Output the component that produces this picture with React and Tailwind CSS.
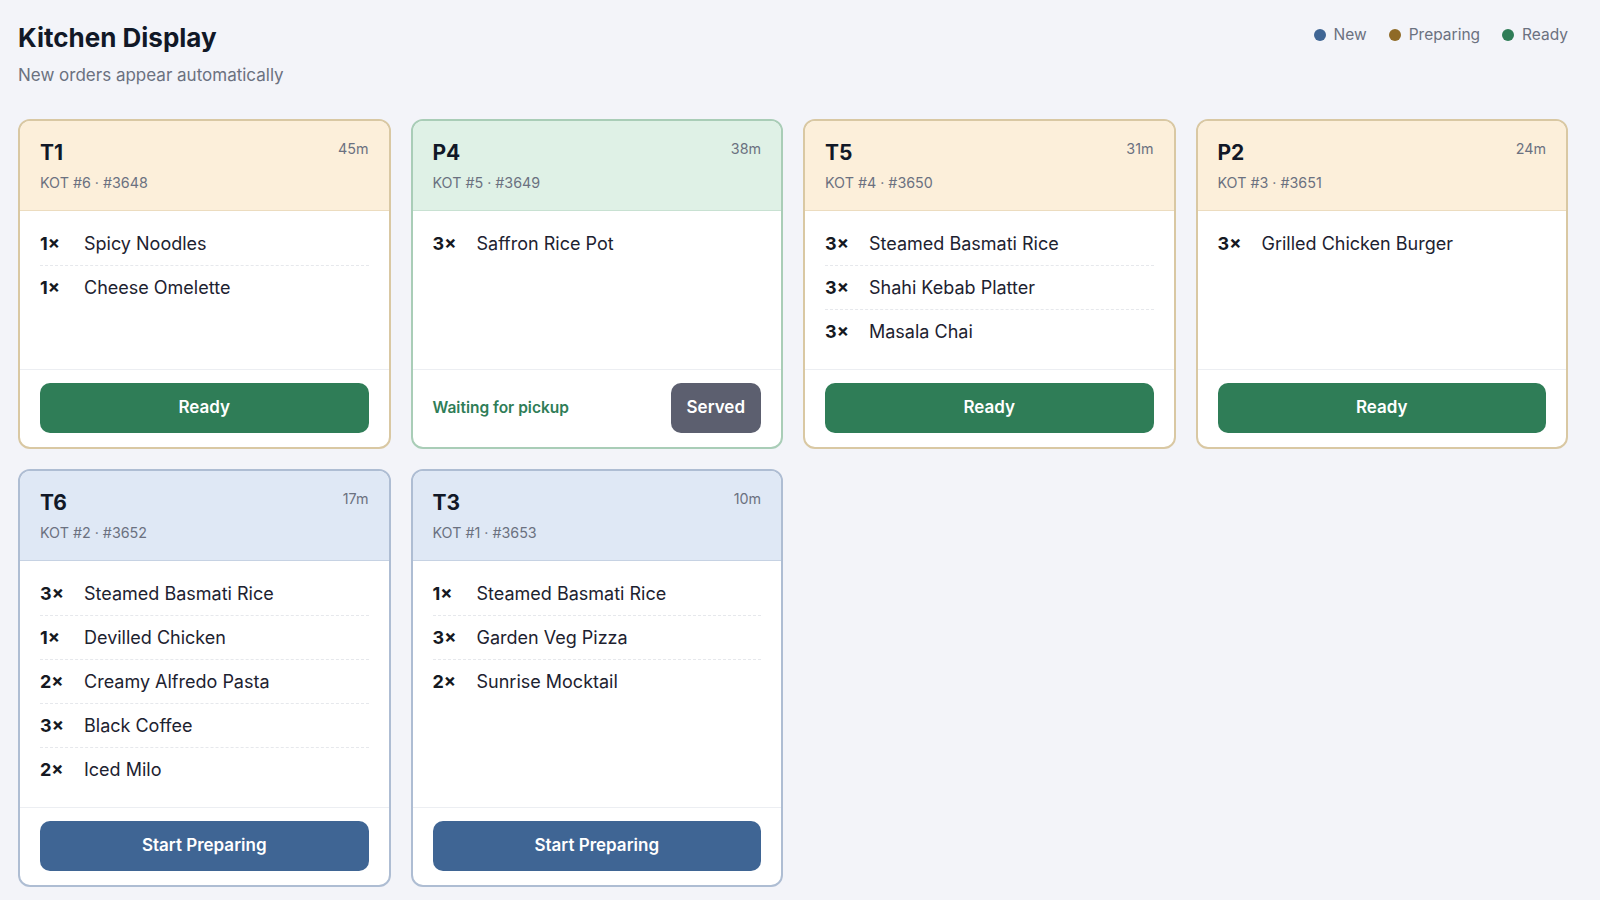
import React from 'react'

const tones = {
  new: {
    border: 'border-[#aebdd3]',
    head: 'bg-[#dfe8f5] border-[#c6d2e3]',
  },
  preparing: {
    border: 'border-[#d9c8a3]',
    head: 'bg-[#fcefda] border-[#ecdcbf]',
  },
  ready: {
    border: 'border-[#a9cdb7]',
    head: 'bg-[#dff1e6] border-[#c8e1d2]',
  },
}

const orders = [
  {
    table: 'T1', kot: 6, id: 3648, age: '45m', status: 'preparing',
    items: [[1, 'Spicy Noodles'], [1, 'Cheese Omelette']],
  },
  {
    table: 'P4', kot: 5, id: 3649, age: '38m', status: 'ready',
    items: [[3, 'Saffron Rice Pot']],
  },
  {
    table: 'T5', kot: 4, id: 3650, age: '31m', status: 'preparing',
    items: [[3, 'Steamed Basmati Rice'], [3, 'Shahi Kebab Platter'], [3, 'Masala Chai']],
  },
  {
    table: 'P2', kot: 3, id: 3651, age: '24m', status: 'preparing',
    items: [[3, 'Grilled Chicken Burger']],
  },
  {
    table: 'T6', kot: 2, id: 3652, age: '17m', status: 'new',
    items: [
      [3, 'Steamed Basmati Rice'],
      [1, 'Devilled Chicken'],
      [2, 'Creamy Alfredo Pasta'],
      [3, 'Black Coffee'],
      [2, 'Iced Milo'],
    ],
  },
  {
    table: 'T3', kot: 1, id: 3653, age: '10m', status: 'new',
    items: [[1, 'Steamed Basmati Rice'], [3, 'Garden Veg Pizza'], [2, 'Sunrise Mocktail']],
  },
]

const Legend = () => (
  <div className="flex items-center gap-[22px] pt-[3px] text-[15.5px] leading-5 text-[#6b7180]">
    <span className="flex items-center gap-2">
      <span className="w-3 h-3 rounded-full bg-[#3f6594]" />
      New
    </span>
    <span className="flex items-center gap-2">
      <span className="w-3 h-3 rounded-full bg-[#8f6a26]" />
      Preparing
    </span>
    <span className="flex items-center gap-2">
      <span className="w-3 h-3 rounded-full bg-[#2f7d57]" />
      Ready
    </span>
  </div>
)

const OrderCard = ({ order }) => {
  const tone = tones[order.status]

  return (
    <div className={`flex flex-col bg-white rounded-xl border-2 overflow-hidden ${tone.border}`}>
      {/* Header */}
      <div className={`flex items-start justify-between px-5 pt-[18px] pb-[17px] border-b ${tone.head}`}>
        <div className="flex flex-col gap-[6px]">
          <span className="text-[21px] leading-7 font-bold text-[#111827]">{order.table}</span>
          <span className="text-[14.3px] leading-5 text-[#6b7180]">
            KOT #{order.kot} · #{order.id}
          </span>
        </div>
        <span className="text-[14.3px] leading-5 text-[#6b7180]">{order.age}</span>
      </div>

      {/* Items */}
      <div className="flex-1 px-5 pt-[11px] pb-4">
        {order.items.map(([qty, name], i) => (
          <div
            key={i}
            className="flex items-baseline py-[10px] leading-[23px] border-b border-dashed border-[#e6e8ec] last:border-b-0"
          >
            <span className="w-[44px] shrink-0 text-[18px] font-bold text-[#151922]">{qty}×</span>
            <span className="text-[18px] text-[#1d2230]">{name}</span>
          </div>
        ))}
      </div>

      {/* Actions */}
      <div className="px-5 pt-[13px] pb-[14px] border-t border-[#eceef2]">
        {order.status === 'ready' ? (
          <div className="flex items-center justify-between">
            <span className="text-[15.5px] font-semibold text-[#2f7d57]">Waiting for pickup</span>
            <button className="h-[50px] px-4 rounded-[10px] bg-[#5c5f6f] text-white text-[17px] font-semibold">
              Served
            </button>
          </div>
        ) : order.status === 'preparing' ? (
          <button className="w-full h-[50px] rounded-[10px] bg-[#2f7d57] text-white text-[17px] font-semibold">
            Ready
          </button>
        ) : (
          <button className="w-full h-[50px] rounded-[10px] bg-[#3f6594] text-white text-[17px] font-semibold">
            Start Preparing
          </button>
        )}
      </div>
    </div>
  )
}

const App = () => {
  return (
    <div className="min-h-screen bg-[#f3f4f9] pl-[18px] pr-[32px] pt-[22px] pb-6 font-['Inter',sans-serif]">
      <div className="flex items-start justify-between">
        <div>
          <h1 className="text-[26px] leading-8 font-bold text-[#111827]">Kitchen Display</h1>
          <p className="mt-[9px] text-[17px] leading-6 text-[#6b7180]">New orders appear automatically</p>
        </div>
        <Legend />
      </div>

      <div className="grid grid-cols-4 gap-5 mt-[32px] items-stretch">
        {orders.map((order) => (
          <OrderCard key={order.id} order={order} />
        ))}
      </div>
    </div>
  )
}

export default App
